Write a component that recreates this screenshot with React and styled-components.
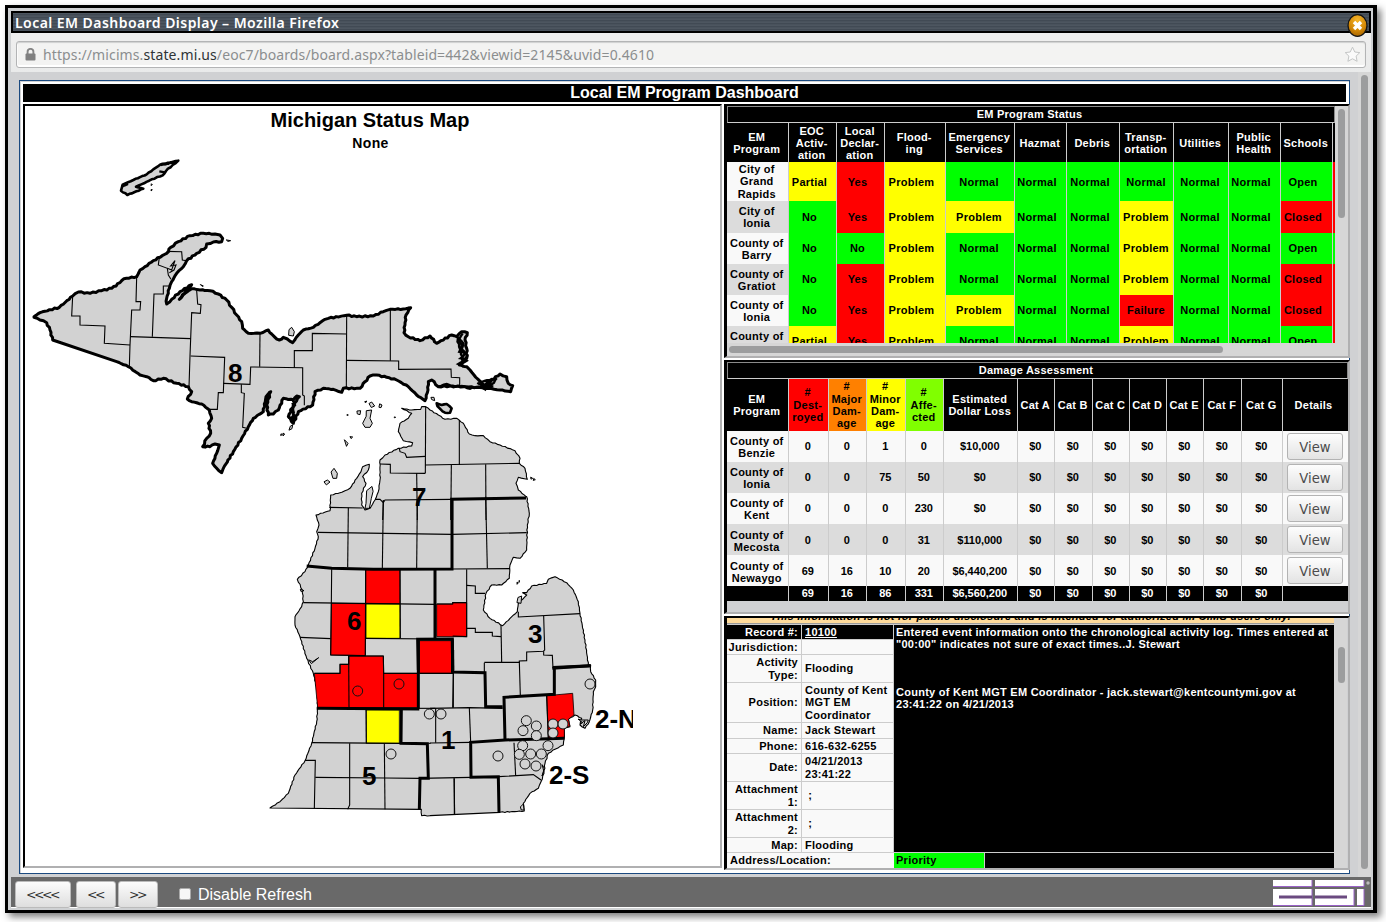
import React from "react";
import styled, { createGlobalStyle } from "styled-components";

const GlobalStyle = createGlobalStyle`
  * { box-sizing: border-box; }
  body { margin: 0; background: #fff; font-family: "Liberation Sans", Arial, sans-serif; overflow: hidden; }
`;

/* ---------- window chrome ---------- */

const Desktop = styled.div`
  width: 1386px;
  height: 922px;
  padding: 5px 9px 9px 5px;
`;

const Window = styled.div`
  display: flex;
  flex-direction: column;
  width: 1372px;
  height: 908px;
  padding: 3px 2px 3px 3px;
  border: 3px solid #000;
  border-right-width: 4px;
  background: #cfd1d3;
  box-shadow: 4px 4px 7px rgba(0, 0, 0, 0.5);
`;

const TitleBar = styled.div`
  position: relative;
  flex: none;
  height: 22px;
  padding: 0 2px;
  border: 2px solid #000;
  background: repeating-linear-gradient(#4d5660 0 1px, #414a54 1px 2px, #49525c 2px 3px);
  color: #fff;
  font: 600 14px/20px "Noto Sans", "Open Sans", sans-serif;
  letter-spacing: 0.45px;
  white-space: nowrap;
`;

const CloseIcon = styled.svg`
  position: absolute;
  right: 1px;
  top: 1px;
  width: 21px;
  height: 23px;
`;

const LocationBar = styled.div`
  flex: none;
  height: 39px;
  padding: 8px 5px 4px;
  background: linear-gradient(#eee 0 8px, #e9eaea);
`;

const UrlField = styled.div`
  display: flex;
  align-items: center;
  height: 27px;
  padding: 0 4px 0 8px;
  border: 1px solid #b3b4b5;
  border-radius: 3px;
  background: #f3f3f2;
  box-shadow: inset 0 1px 1px #cfd0d0, inset 0 -2px 0 #fff, inset 1px 0 0 #fff;
  color: #8b8e8f;
  font: 400 14px/24px "Noto Sans", "Open Sans", sans-serif;
  white-space: nowrap;
`;

const Url = styled.span`
  flex: 1;
  padding-left: 7px;
  letter-spacing: 0.11px;
  b { font-weight: 400; color: #2e3436; }
`;

const Page = styled.div`
  display: flex;
  flex: none;
  height: 805px;
  padding: 8px 0 3px 8px;
  background: #d0d1d3;
`;

const Frame = styled.div`
  flex: none;
  width: 1331px;
  height: 794px;
  padding: 2px;
  border: 1px solid #1b4a80;
  background: #fff;
  box-shadow: inset 1px 1px 0 #d0d1d3;
`;

const Track = styled.div`
  flex: none;
  width: ${(p) => (p.$horizontal ? "auto" : "13px")};
  height: ${(p) => (p.$horizontal ? "13px" : "auto")};
  background: #d6d6d6;
  padding: ${(p) => p.$pad || "0"};
`;

const PageTrack = styled(Track)`
  height: 805px;
  margin: -8px 0 0 8px;
`;

const Thumb = styled.div`
  width: ${(p) => p.$w}px;
  height: ${(p) => p.$h}px;
  border-radius: 4px;
  background: #9c9d9e;
`;

const Banner = styled.div`
  height: 18px;
  width: 1323px;
  margin: 1px 0 1px 1px;
  background: #000;
  color: #fff;
  text-align: center;
  font-weight: 700;
  font-size: 16px;
  line-height: 18px;
`;

const Columns = styled.div`
  display: flex;
  gap: 2px;
  padding: 1px 0 0 1px;
`;

const Stack = styled.div`
  display: flex;
  flex: none;
  flex-direction: column;
  gap: 2px;
`;

const Inset = styled.section`
  flex: none;
  width: ${(p) => p.$w}px;
  height: ${(p) => p.$h}px;
  border: 2px solid #000;
  border-left-width: ${(p) => p.$left || 2}px;
  border-right-color: #b0b0b1;
  border-bottom-color: #b0b0b1;
  background: ${(p) => p.$bg || "#d0d1d3"};
  overflow: hidden;
`;

/* ---------- map ---------- */

const MapTitle = styled.h1`
  margin: 0;
  height: 28px;
  padding-right: 5px;
  text-align: center;
  font-size: 20px;
  line-height: 28px;
`;

const MapSubtitle = styled.div`
  height: 20px;
  padding-right: 4px;
  text-align: center;
  font-weight: 700;
  font-size: 14px;
  line-height: 18px;
  letter-spacing: 0.4px;
`;

const MapSvg = styled.svg`
  display: block;
  width: 608px;
  height: 712px;
`;

const Region = styled.text`
  font: 700 26px "Liberation Sans", Arial, sans-serif;
`;

/* Survey tiles are drawn at three units per pixel, each with its own origin. */
const TILES = { a: [20, 220], b: [270, 290], c: [260, 470], d: [430, 470], e: [260, 650], f: [430, 650], o: [0, 0] };

const points = (tile, text) =>
  text.trim().split(/\s+/).map((pair) => {
    const [x, y] = pair.split(",").map(Number);
    return [TILES[tile][0] + x / 3, TILES[tile][1] + y / 3];
  });

const toPath = (list, closed) =>
  "M" + list.map(([x, y]) => x.toFixed(2) + " " + y.toFixed(2)).join("L") + (closed ? "Z" : "");

const shore = (list, amount) => {
  const out = [];
  list.forEach(([x, y], i) => {
    out.push([x, y]);
    const next = list[(i + 1) % list.length];
    const dx = next[0] - x;
    const dy = next[1] - y;
    const len = Math.hypot(dx, dy);
    if (len > 32) return;
    const n = Math.floor(len / 2.4);
    for (let k = 1; k < n; k++) {
      const off = Math.sin((i + 1) * 12.9 + k * 78.2) * amount;
      out.push([x + (dx * k) / n - (dy / len) * off, y + (dy * k) / n + (dx / len) * off]);
    }
  });
  return out;
};

const UPPER = [
  ...points("a", `42,290 60,278 118,262 158,228 175,216 210,220 245,212 275,205 300,188 312,176 350,170 360,150 375,140
    400,122 440,100 452,82 475,65 510,47 550,40 585,42 600,45 608,55 605,65 580,66 560,72 558,82 530,100 500,122 490,140
    470,160 455,185 448,205 440,235 440,252 455,238 480,215 515,194 478,238 495,220 515,206 540,210 570,212 595,222 620,240
    635,262 650,285 665,305 668,325 685,340 720,340 745,330`),
  ...points("b", `5,132 15,142 28,150 40,142 52,147 68,158 85,135 100,120 130,112 165,88 175,85 230,76 260,80 310,78
    340,65 360,58 400,57 422,53 408,75 405,105 402,128 415,140 450,152 480,138 500,160 545,135 560,140 575,125 592,128
    585,150 590,175 590,205 568,225 590,230 600,240 612,255 635,280 655,290 665,270 690,252 710,260 715,280 728,287
    722,305 690,300 655,295 620,292 580,290 540,288 505,290 485,270 475,275 474,300 465,332 440,315 415,290 380,270
    350,262 320,255 300,258 285,275 270,295 220,295 215,307 190,298 160,295 135,305 128,345 85,365 70,400 55,380 70,345
    88,320 80,318 70,330 40,325 25,360 10,372`),
  ...points("a", `745,585 740,555 752,515 738,530 730,575 700,595 685,620 665,655 640,695 610,745 605,758 590,745 578,730
    590,700 598,675 585,672 570,680 548,680 560,655 572,640 565,610 575,595 568,570 545,552 515,545 502,537 515,515
    505,500 470,490 430,475 400,482 380,470 360,465 325,440 290,425 98,360 90,330 80,308 60,300 42,292`),
];

const LOWER = [
  ...points("b", `395,355 425,360 452,358 455,350 467,350 480,360 505,375 525,388 560,385 580,400 598,432 615,437 640,437
    660,455 690,465 735,482 750,505 748,520 765,535 772,568 745,562 738,580 745,600 768,620`),
  ...points("d", `290,80 298,130 292,165 290,240 270,265 250,262 240,285 238,325 215,345 185,345 168,370 160,420 180,445
    218,467 240,445 262,425 265,400 290,375 278,368 290,368 305,348 350,340 355,328 375,320 410,338 430,360 445,395
    450,430 465,510 475,585`),
  ...points("f", `482,45 482,65 497,90 497,110 490,125 488,180 478,215 465,235 450,225 455,205 435,195 415,208 420,230
    403,235 403,265 400,285 375,298 355,310 345,340 342,370 333,395 325,415 300,430 280,460 283,483 210,487 0,497`),
  ...points("e", `485,497 484,478 30,474 60,455 85,430 105,375 135,332 155,280 170,215 173,175 172,120 160,70 140,25`),
  ...points("c", `120,500 105,465 105,440 125,410 130,395 127,360 112,328 135,305 145,285 165,235 175,200 170,185
    177,165 168,135 210,122 212,75 235,70 255,62 270,55 290,25 303,5`),
  ...points("b", `278,530 298,523 295,540 278,560 288,580 275,610 275,645 285,660 300,655 315,630 325,605 330,570
    330,510 345,495 385,475 425,468 428,458 400,452 385,425 390,400 415,385 425,370`),
];

const ISLANDS = [
  ["b", "290,362 305,360 300,385 307,400 300,412 285,412 278,400 288,380"],
  ["b", "298,340 305,336 314,348 305,352"], ["b", "330,342 336,345 333,353 328,352"],
  ["b", "262,363 272,362 270,374 263,372"], ["b", "224,450 234,460 230,468"], ["b", "241,440 248,441 244,445"],
  ["b", "184,545 192,535 202,550 200,565 190,565"], ["b", "163,575 172,570 180,576 170,584"],
  ["b", "305,590 290,602 288,640 285,655 298,655 304,625 309,605"],
  ["b", "58,118 65,112 73,125 70,138 57,136"],
  ["b", "484,322 492,322 494,332 486,329"], ["b", "232,374 235,375 232,376"], ["b", "374,381 377,382 374,383"],
  ["b", "40,430 44,432 40,437"], ["b", "62,408 68,405 66,416 58,420"], ["b", "34,432 37,434 33,436"], ["b", "285,335 290,333 288,337"],
  ["d", "262,337 265,338 262,342"], ["d", "268,332 270,334 268,336"], ["d", "265,382 275,378 273,400 262,398"],
  ["d", "303,22 308,25 304,27"], ["d", "312,26 316,29 311,31"],
  ["a", "620,60 632,62 625,64"], ["a", "542,194 550,198 548,199"], ["o", "455,552 457,554 454,556"], ["o", "455,568 457,570 454,572"],
  ["f", "445,208 458,218 450,222 465,212 460,230 472,218 475,210 455,210"],
  ["c", "147,570 158,575 176,563 165,572 155,580"], ["c", "122,358 132,362 124,364"],
  ["f", "337,345 343,355 336,378 341,365"], ["f", "272,470 280,462 282,480 275,480"],
];

const ROCKY = [
  ["b", "500,340 515,345 530,342 545,355 540,368 525,368 512,358 502,348"],
  ["o", "363,572 368,554 400,540 440,523 480,494 535,482 518,495 498,513 488,526 455,538 432,550 408,560 430,566 382,585"],
];

const HEAVY_DETAIL = [
  ["b", "578,130 565,150 575,165 568,185 585,190 572,205 590,212 565,222 580,230"], ["b", "560,140 580,160 575,178 592,195 580,215"],
  ["b", "505,290 530,282 550,292 575,288 600,296 625,290 645,298 650,280 670,290"], ["b", "622,278 640,290 655,275 662,290 680,265"],
  ["b", "68,330 75,345 62,360 72,375 60,385 72,398"], ["a", "748,515 742,535 737,545"], ["a", "480,236 500,210 515,195"],
  ["o", "482,495 528,485"], ["o", "478,514 495,517"], ["o", "364,560 384,552"],
];

const FILLED = [
  ["#f00", "c", "317,299 420,299 420,402 317,402"], ["#f00", "c", "214,400 317,401 316,557 212,555"],
  ["#ff0", "c", "318,402 420,402 420,505 318,505"], ["#f00", "d", "20,402 68,402 68,398 110,398 110,500 20,500"],
  ["#f00", "e", "478,-28 575,-28 575,70 478,70"],
  ["#f00", "e", "163,70 240,70 240,43 266,43 266,18 370,18 371,70 475,70 475,173 173,173"],
  ["#ff0", "e", "319,180 418,180 418,280 319,280"],
  ["#f00", "f", "350,137 428,130 432,195 415,208 420,228 403,235 403,262 355,265"],
];

const COUNTY_LINES = [
  ["a", "158,228 155,288 180,288 180,315 255,318 253,370 330,375"],
  ["a", "350,170 348,245 362,245 360,270 335,270 330,375 328,440"], ["a", "332,350 512,356"],
  ["a", "448,198 430,198 430,222 402,222 397,350"], ["a", "440,94 485,95 487,120 500,122"],
  ["a", "418,112 415,135 442,145 445,165 453,178"], ["a", "442,145 455,150 465,122 452,138 468,135 462,150 448,158"],
  ["a", "530,212 533,252 543,254 541,280 515,278 510,408 507,500"],
  ["a", "512,408 614,412 610,518 595,518 592,568 570,568"], ["a", "720,340 719,440"],
  ["a", "610,490 690,493 692,441 848,443 848,525 853,528 853,556"], ["a", "664,493 664,518 673,520 668,622 680,625"],
  ["b", "73,233 73,182 127,182 127,130 230,132"], ["b", "230,78 229,295"], ["b", "361,60 361,212"],
  ["b", "230,211 386,213 386,238 543,237 544,262 569,263 569,290"],
  ["b", "467,350 466,550"], ["b", "568,390 568,525"], ["b", "466,525 750,520"], ["b", "388,475 390,485 405,490 410,502 466,499"],
  ["b", "330,522 361,523 361,549 466,550"], ["b", "440,550 442,690"], ["b", "544,525 543,630"], ["b", "647,523 648,690"],
  ["b", "315,628 330,628 340,638 345,630 545,628"], ["b", "340,632 338,690"],
  ["c", "265,113 263,292"], ["c", "370,90 367,297"], ["c", "472,90 470,295"], ["c", "174,187 575,193"], ["c", "208,112 308,114"],
  ["c", "215,298 214,400 212,555 316,557 317,300"], ["c", "130,398 525,403"], ["c", "120,502 212,506"], ["c", "420,298 421,505"],
  ["c", "316,505 525,507"], ["d", "167,80 172,295"], ["d", "65,193 290,188"], ["d", "65,297 240,296"],
  ["d", "110,298 110,500 68,498"], ["d", "110,346 136,348 136,370 165,370"], ["d", "20,402 68,402 68,398 110,398"],
  ["d", "110,475 136,475 136,487 187,487 187,498 213,500"], ["d", "213,465 215,577"],
  ["d", "163,577 268,577 268,573 290,572 290,546 340,544 344,540 341,438"], ["d", "265,425 265,441 450,431"],
  ["d", "341,544 341,555 367,556 369,595"],
  ["f", "163,38 163,68"], ["f", "268,35 271,137"], ["f", "70,68 70,173"], ["f", "0,175 118,173 218,175"], ["f", "118,173 122,277"],
  ["f", "0,279 122,277"], ["f", "-33,385 123,382"], ["f", "72,385 74,492"], ["f", "252,278 257,378"],
  ["f", "207,380 310,374 333,390"], ["f", "350,138 355,268"],
  ["e", "163,70 240,70 240,43 266,43 266,18 370,18 371,70 475,70"], ["e", "266,18 267,173"], ["e", "371,70 371,173"],
  ["e", "318,180 319,280"], ["e", "155,278 423,280"], ["e", "269,280 269,465 263,478"], ["e", "373,280 375,478"],
  ["e", "135,331 166,331 163,476"], ["e", "166,382 375,384 480,385"], ["e", "478,70 580,70 578,173"], ["e", "478,175 526,175"],
  ["e", "527,175 527,278"], ["e", "505,280 512,280"], ["e", "583,385 583,495"],
];

const DISTRICT_LINES = [
  ["b", "545,690 545,628 768,624"], ["c", "140,288 215,295 340,298 576,297 576,88"], ["c", "525,300 525,505"],
  ["c", "475,600 473,508 577,507 578,600"],
  ["e", "170,175 478,177"], ["e", "475,-30 475,177"], ["e", "424,177 423,280 502,281 505,385 480,385 478,478"],
  ["e", "577,-32 578,66"], ["d", "367,595 482,587"],
  ["f", "482,47 373,52 373,133 222,142 225,270"], ["f", "68,0 68,66 165,68 167,170 218,170"], ["f", "403,265 225,270 122,277 123,382 205,380 207,487"],
];

const SITES = [
  ["e", "293,123 417,102 508,192 543,192 393,312"],
  ["f", "480,102 289,212 319,228 279,242 319,257 369,222 399,222 369,249 278,287 354,287 268,313 302,312 334,312 285,342 318,348 204,318"],
];

const REGIONS = [
  ["8", 228, 382], ["7", 412, 506], ["6", 347, 630], ["3", 528, 643], ["1", 441, 749], ["5", 362, 785], ["2-N", 595, 728], ["2-S", 549, 784],
];

function MichiganMap() {
  return (
    <MapSvg viewBox="25 154 608 712">
      <g fill="#d2d2d2" stroke="#000" strokeLinejoin="round" strokeLinecap="round">
        <path d={toPath(shore(UPPER, 0.6), true)} strokeWidth="3" />
        <path d={toPath(shore(LOWER, 0.4), true)} strokeWidth="1.1" />
        {ROCKY.map(([t, p]) => <path key={p} d={toPath(shore(points(t, p), 0.4), true)} strokeWidth="2.6" />)}
        {ISLANDS.map(([t, p]) => <path key={p} d={toPath(points(t, p), true)} strokeWidth="1" />)}
      </g>
      {FILLED.map(([color, t, p]) => <path key={p} d={toPath(points(t, p), true)} fill={color} stroke="#000" strokeWidth="0.8" />)}
      <g fill="none" stroke="#000">
        {COUNTY_LINES.map(([t, p]) => <path key={t + p} d={toPath(points(t, p))} strokeWidth="1.1" />)}
        {DISTRICT_LINES.map(([t, p]) => <path key={t + p} d={toPath(points(t, p))} strokeWidth="3" />)}
        {HEAVY_DETAIL.map(([t, p]) => <path key={t + p} d={toPath(shore(points(t, p), 0.6))} strokeWidth="2.4" />)}
      </g>
      <g stroke="#111" strokeWidth="1">
        {SITES.map(([t, p]) => points(t, p).map(([x, y], i) => (
          <circle key={t + i} cx={x} cy={y} r="5" fill={t === "f" ? "#d2d2d2" : "none"} />
        )))}
      </g>
      {REGIONS.map(([label, x, y]) => <Region key={label} x={x} y={y}>{label}</Region>)}
    </MapSvg>
  );
}

/* ---------- tables ---------- */

const Row = styled.div`
  display: grid;
  grid-template-columns: ${(p) => p.$cols};
  height: ${(p) => p.$h}px;
`;

const Cell = styled.div`
  display: flex;
  align-items: center;
  justify-content: center;
  padding: ${(p) => p.$drop || 0}px ${(p) => p.$shift ?? 1.5}px 0 0;
  border-right: ${(p) => (p.$last ? 0 : 1)}px solid #ccc;
  background: ${(p) => p.$bg || "transparent"};
  color: ${(p) => p.$fg || "#000"};
  font-weight: 700;
  font-size: 11px;
  line-height: ${(p) => p.$lh || 12}px;
  letter-spacing: ${(p) => p.$ls ?? 0.25}px;
  text-align: center;
  white-space: pre;
  overflow: hidden;
`;

const Caption = styled.div`
  width: ${(p) => p.$w}px;
  height: ${(p) => p.$h}px;
  padding-right: 3px;
  border: 1px solid #8a8a8a;
  border-bottom-color: #ccc;
  background: #000;
  color: #fff;
  text-align: center;
  font-weight: 700;
  font-size: 11px;
  line-height: 14px;
  letter-spacing: 0.25px;
`;

const Split = styled.div`
  display: flex;
`;

const Viewport = styled.div`
  width: ${(p) => p.$w}px;
  height: ${(p) => p.$h}px;
  overflow: hidden;
`;

const ViewButton = styled.button`
  width: 56px;
  height: 27px;
  padding: 1px 0 0;
  border: 1px solid #b3b3b3;
  border-radius: 3px;
  background: linear-gradient(#fdfdfd, #e3e3e3);
  color: #4b4b4b;
  font: 400 13.2px "DejaVu Sans", sans-serif;
`;

const STATUS_COLS = "62px 48px 48px 61px 69px 52px 53px 54px 55px 52px 52px 2px";
const SHIFT = [0, 6, 6, 7, 2, 7, 6, 1, 2, 7, 7, 0];
const STATUS_HEAD = ["EM\nProgram", "EOC\nActiv-\nation", "Local\nDeclar-\nation", "Flood-\ning", "Emergency\nServices", "Hazmat", "Debris", "Transp-\nortation", "Utilities", "Public\nHealth", "Schools", ""];
const LEVEL = { Partial: "#ff0", Problem: "#ff0", Yes: "#f00", Closed: "#f00", Failure: "#f00", No: "#0f0", Normal: "#0f0", Open: "#0f0" };

const STATUS = [
  [39, "City of\nGrand\nRapids", "Partial Yes Problem Normal Normal Normal Normal Normal Normal Open", "#f00"],
  [32, "City of\nIonia", "No Yes Problem Problem Normal Normal Problem Normal Normal Closed", "#f00"],
  [31, "County of\nBarry", "No No Problem Normal Normal Normal Problem Normal Normal Open", "#0f0"],
  [31, "County of\nGratiot", "No Yes Problem Normal Normal Normal Problem Normal Normal Closed", "#f00"],
  [31, "County of\nIonia", "No Yes Problem Problem Normal Normal Failure Normal Normal Closed", "#f00"],
  [31, "County of\nKent", "Partial Yes Problem Normal Normal Normal Problem Normal Normal Open", "#f00"],
];

function StatusPanel() {
  return (
    <Inset $w={626} $h={254} $left={3}>
      <Split>
        <Viewport $w={608} $h={237}>
          <Caption $w={608} $h={17}>EM Program Status</Caption>
          <Row $cols={STATUS_COLS} $h={39}>
            {STATUS_HEAD.map((h, i) => <Cell key={i} $bg="#000" $fg="#fff" $drop={1} $last={i === 11}>{h}</Cell>)}
          </Row>
          {STATUS.map(([h, name, cells, edge], r) => (
            <Row key={r} $cols={STATUS_COLS} $h={h}>
              <Cell $bg={r % 2 ? "#dcdcdc" : "#f9f9f9"} $lh={r ? 12 : 12.5}>{name}</Cell>
              {cells.split(" ").map((c, i) => (
                <Cell key={i} $bg={LEVEL[c]} $shift={SHIFT[i + 1]} $lh={r ? 12.4 : 12} $drop={r ? 0 : 1}>{c}</Cell>
              ))}
              <Cell $bg={edge} $last />
            </Row>
          ))}
        </Viewport>
        <Track $pad="3px 3px"><Thumb $w={7} $h={109} /></Track>
      </Split>
      <Track $horizontal $pad="3px 2px"><Thumb $w={494} $h={7} /></Track>
    </Inset>
  );
}

const DAMAGE_COLS = "62px 40px 38px 39px 38px 74px 37px 38px 37px 37px 37px 38px 41px 65px";
const DAMAGE_HEAD = ["EM\nProgram", "#\nDest-\nroyed", "#\nMajor\nDam-\nage", "#\nMinor\nDam-\nage", "#\nAffe-\ncted", "Estimated\nDollar Loss", "Cat A", "Cat B", "Cat C", "Cat D", "Cat E", "Cat F", "Cat G", "Details"];
const HEAD_BG = { 1: "#f00", 2: "#ff8000", 3: "#ff0", 4: "#80ff00" };
const DAMAGE = [
  ["County of\nBenzie", 0, 0, 1, 0, "$10,000"],
  ["County of\nIonia", 0, 0, 75, 50, "$0"],
  ["County of\nKent", 0, 0, 0, 230, "$0"],
  ["County of\nMecosta", 0, 0, 0, 31, "$110,000"],
  ["County of\nNewaygo", 69, 16, 10, 20, "$6,440,200"],
];
const CATS = Array(7).fill("$0");

function DamagePanel() {
  return (
    <Inset $w={626} $h={254} $left={3}>
      <Caption $w={621} $h={17}>Damage Assessment</Caption>
      <Row $cols={DAMAGE_COLS} $h={52}>
        {DAMAGE_HEAD.map((h, i) => (
          <Cell key={i} $bg={HEAD_BG[i] || "#000"} $fg={HEAD_BG[i] ? "#000" : "#fff"} $lh={12.4} $last={i === 13} $shift={i === 13 ? 4 : 1.5}>{h}</Cell>
        ))}
      </Row>
      {DAMAGE.map((row, r) => {
        const bg = r % 2 ? "#dcdcdc" : "#f9f9f9";
        return (
          <Row key={r} $cols={DAMAGE_COLS} $h={31}>
            {[...row, ...CATS].map((v, i) => (
              <Cell key={i} $bg={bg} $drop={r > 2 ? 2 : 0} $lh={i ? 12.4 : 12} $ls={i ? -0.05 : 0.25}>{v}</Cell>
            ))}
            <Cell $bg={bg} $last $shift={1}><ViewButton>View</ViewButton></Cell>
          </Row>
        );
      })}
      <Row $cols={DAMAGE_COLS} $h={15}>
        {["", 69, 16, 86, 331, "$6,560,200", ...CATS, ""].map((v, i) => (
          <Cell key={i} $bg="#000" $fg="#fff" $lh={12.4} $ls={-0.05} $last={i === 13}>{v}</Cell>
        ))}
      </Row>
    </Inset>
  );
}

const Notice = styled.div`
  height: 6px;
  overflow: hidden;
  display: flex;
  align-items: flex-end;
  justify-content: center;
  border-bottom: 1px solid #999;
  background: #ffdb9b;
  font: italic 700 11px/12px "Liberation Sans", Arial, sans-serif;
  letter-spacing: 0.25px;
  white-space: nowrap;
  span { flex: none; margin-bottom: 1px; }
`;

const LogGrid = styled.div`
  display: grid;
  grid-template-columns: 167px 441px;
  border-top: 1px solid #ccc;
  font-weight: 700;
  font-size: 11px;
  line-height: 12.4px;
  letter-spacing: 0.26px;
`;

const Field = styled.div`
  display: grid;
  grid-template-columns: 75px 92px;
  height: ${(p) => p.$h}px;
  border-bottom: 1px solid #ccc;
  background: ${(p) => (p.$dark ? "#000" : "#f9f9f9")};
  color: ${(p) => (p.$dark ? "#fff" : "#000")};
`;

const Label = styled.div`
  display: flex;
  align-items: center;
  justify-content: flex-end;
  padding-right: 3px;
  border-right: 1px solid #ccc;
  text-align: right;
  white-space: pre;
`;

const Value = styled.div`
  display: flex;
  align-items: center;
  padding-left: 3px;
  border-right: 1px solid #ccc;
  white-space: pre;
  text-decoration: ${(p) => (p.$link ? "underline" : "none")};
`;

const Entry = styled.div`
  padding: 1px 2px;
  background: #000;
  color: #fff;
  white-space: pre;
  border-bottom: 1px solid #ccc;
  p { margin: 0 0 35px; }
`;

const Footer = styled.div`
  display: flex;
  align-items: center;
  height: 15px;
  padding-left: ${(p) => (p.$dark ? 0 : 3)}px;
  background: ${(p) => (p.$dark ? "#000" : "#f9f9f9")};
`;

const Priority = styled.div`
  width: 91px;
  height: 15px;
  padding-left: 2px;
  border-right: 1px solid #ccc;
  background: #0f0;
  line-height: 15px;
`;

const FIELDS = [
  [15, "Record #:", "10100"], [15, "Jurisdiction:", ""], [28, "Activity\nType:", "Flooding"],
  [40, "Position:", "County of Kent\nMGT EM\nCoordinator"], [16, "Name:", "Jack Stewart"], [15, "Phone:", "616-632-6255"],
  [28, "Date:", "04/21/2013\n23:41:22"], [28, "Attachment\n1:", " ;"], [28, "Attachment\n2:", " ;"], [15, "Map:", "Flooding"],
];

function LogPanel() {
  return (
    <Inset $w={626} $h={254} $left={3}>
      <Split>
        <Viewport $w={607} $h={250}>
          <Notice><span>This information is not for public disclosure and is intended for authorized MI CIMS users only.</span></Notice>
          <LogGrid>
            <div>
              {FIELDS.map(([h, label, value], i) => (
                <Field key={label} $h={h} $dark={i === 0}>
                  <Label>{label}</Label>
                  <Value $link={i === 0}>{value}</Value>
                </Field>
              ))}
            </div>
            <Entry>
              <p>{'Entered event information onto the chronological activity log. Times entered at\n"00:00" indicates not sure of exact times..J. Stewart'}</p>
              {"County of Kent MGT EM Coordinator - jack.stewart@kentcountymi.gov at\n23:41:22 on 4/21/2013"}
            </Entry>
            <Footer>Address/Location:</Footer>
            <Footer $dark><Priority>Priority</Priority></Footer>
          </LogGrid>
        </Viewport>
        <Track $pad="29px 4px 0"><Thumb $w={7} $h={36} /></Track>
      </Split>
    </Inset>
  );
}

/* ---------- bottom bar ---------- */

const BottomBar = styled.div`
  display: flex;
  align-items: flex-start;
  flex: none;
  height: 31px;
  padding: 4px 0 0 4px;
  border-bottom: 1px solid #fff;
  background: #696969;
  color: #fff;
  font-size: 16px;
`;

const NavButton = styled.button`
  width: ${(p) => p.$w}px;
  height: 27px;
  margin-right: ${(p) => p.$gap}px;
  padding: 0 2px 0 0;
  border: 1px solid #bbb;
  border-radius: 3px;
  background: linear-gradient(#fcfcfc, #dedede);
  color: #333;
  font: 400 12.5px "DejaVu Sans", sans-serif;
  letter-spacing: -2.5px;
`;

const Check = styled.span`
  width: 12px;
  height: 12px;
  margin: 7px 7px 0 0;
  border: 1px solid #aaa;
  border-radius: 2px;
  background: #f6f6f6;
`;

const CheckLabel = styled.label`
  flex: 1;
  line-height: 28px;
`;

const Logo = styled.svg`
  width: 98px;
  height: 26px;
  margin-top: -1px;
`;

export default function App() {
  return (
    <>
      <GlobalStyle />
      <Desktop>
        <Window>
          <TitleBar>
            Local EM Dashboard Display – Mozilla Firefox
            <CloseIcon viewBox="0 0 21 23">
              <defs>
                <radialGradient id="amber" cx=".5" cy=".25" r=".75">
                  <stop offset="0" stopColor="#f4b52c" /><stop offset=".6" stopColor="#d68b08" /><stop offset="1" stopColor="#a86500" />
                </radialGradient>
              </defs>
              <ellipse cx="10.5" cy="11.5" rx="9.5" ry="10.8" fill="url(#amber)" stroke="#161616" strokeWidth="1.3" />
              <path d="M7 8L14 15M14 8L7 15" stroke="#fff" strokeWidth="3.4" />
            </CloseIcon>
          </TitleBar>
          <LocationBar>
            <UrlField>
              <svg width="11" height="13" viewBox="0 0 11 13">
                <path d="M2.6 6V3.8a2.9 2.9 0 0 1 5.8 0V6" fill="none" stroke="#858585" strokeWidth="1.9" />
                <rect x="0.5" y="5.5" width="10" height="7" rx="1" fill="#808080" />
              </svg>
              <Url>https://micims.<b>state.mi.us</b>/eoc7/boards/board.aspx?tableid=442&amp;viewid=2145&amp;uvid=0.4610</Url>
              <svg width="17" height="17" viewBox="0 0 17 17">
                <path d="M8.5 1.2L10.8 6l5 .6-3.7 3.5 1 5.2-4.6-2.5-4.6 2.5 1-5.2L1.2 6.6l5-.6z" fill="#fafafa" stroke="#c4c6c6" strokeLinejoin="round" />
              </svg>
            </UrlField>
          </LocationBar>
          <Page>
            <Frame>
              <Banner>Local EM Program Dashboard</Banner>
              <Columns>
                <Inset $w={699} $h={764} $bg="#fff">
                  <MapTitle>Michigan Status Map</MapTitle>
                  <MapSubtitle>None</MapSubtitle>
                  <MichiganMap />
                </Inset>
                <Stack>
                  <StatusPanel />
                  <DamagePanel />
                  <LogPanel />
                </Stack>
              </Columns>
            </Frame>
            <PageTrack $pad="3px 3px"><Thumb $w={7} $h={794} /></PageTrack>
          </Page>
          <BottomBar>
            <NavButton $w={56} $gap={5}>&lt;&lt;&lt;&lt;</NavButton>
            <NavButton $w={40} $gap={2}>&lt;&lt;</NavButton>
            <NavButton $w={40} $gap={21}>&gt;&gt;</NavButton>
            <Check />
            <CheckLabel>Disable Refresh</CheckLabel>
            <Logo viewBox="0 0 98 26">
              <g fill="#fff" stroke="#9a62c8" strokeWidth="1">
                <path d="M0 0H39V6.5H0zM42 0H91V6.5H42z" stroke="none" />
                <path d="M0 6.5H39V0M42 6.5H91V0" fill="none" />
                <path d="M0 9H39V26H0zM42 9H81V26H42zM84 9H91V26H84z" stroke="none" />
                <path d="M39 9V26M0 25.5H39M42 25.5H81V9M84 25.5H91V9" fill="none" />
              </g>
              <path d="M6 15.5H39V18.5H6zM42 15.5H74V18.5H42z" fill="#6b4a80" />
              <circle cx="95" cy="3" r="1.7" fill="#bbb" />
            </Logo>
          </BottomBar>
        </Window>
      </Desktop>
    </>
  );
}
